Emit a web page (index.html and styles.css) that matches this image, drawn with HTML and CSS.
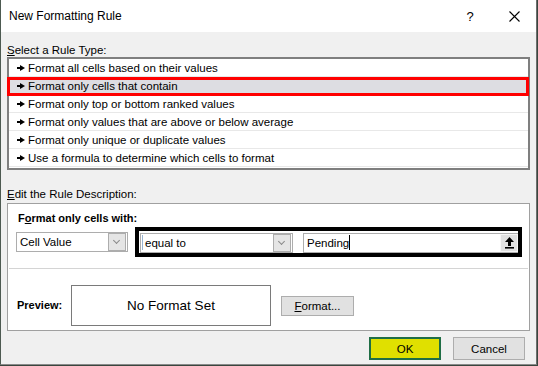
FILE: index.html
```html
<!DOCTYPE html>
<html lang="en">
<head>
    <meta charset="UTF-8">
    <title>New Formatting Rule</title>
    <link rel="stylesheet" href="styles.css">
</head>
<body>
    <div class="dialog">
        <div class="titlebar">
            <div class="title">New Formatting Rule</div>
            <div class="help">?</div>
            <div class="close">
                <svg width="11" height="11" viewBox="0 0 11 11"><path d="M0.5 0.5L10.5 10.5M10.5 0.5L0.5 10.5" stroke="#000" stroke-width="1.1"/></svg>
            </div>
        </div>

        <div class="content">
            <div class="label label-select"><u>S</u>elect a Rule Type:</div>
            <ul class="rule-list">
                <li class="rule"><span class="bullet"></span>Format all cells based on their values</li>
                <li class="rule selected"><span class="bullet"></span>Format only cells that contain</li>
                <li class="rule"><span class="bullet"></span>Format only top or bottom ranked values</li>
                <li class="rule"><span class="bullet"></span>Format only values that are above or below average</li>
                <li class="rule"><span class="bullet"></span>Format only unique or duplicate values</li>
                <li class="rule"><span class="bullet"></span>Use a formula to determine which cells to format</li>
            </ul>

            <div class="label label-edit"><u>E</u>dit the Rule Description:</div>
            <div class="panel">
                <div class="criteria">
                    <div class="label-bold">F<u>o</u>rmat only cells with:</div>
                    <div class="controls">
                        <div class="combo combo-cell">
                            <span class="combo-text">Cell Value</span>
                            <span class="drop"></span>
                        </div>
                        <div class="highlight">
                            <div class="combo combo-op">
                                <span class="combo-text"><span class="caret caret-light"></span>equal to</span>
                                <span class="drop"></span>
                            </div>
                            <div class="combo combo-value">
                                <span class="combo-text">Pending<span class="caret"></span></span>
                                <span class="ref-btn">
                                    <svg width="11" height="13" viewBox="0 0 11 13"><path d="M5.5 1L1 6h3v4h3V6h3z" fill="#000"/><rect x="1" y="11" width="9" height="1.6" fill="#000"/></svg>
                                </span>
                            </div>
                        </div>
                    </div>
                </div>
                <div class="preview-row">
                    <div class="label-bold preview-label">Preview:</div>
                    <div class="preview-box">No Format Set</div>
                    <button class="btn btn-format"><u>F</u>ormat...</button>
                </div>
            </div>

            <div class="actions">
                <button class="btn btn-ok">OK</button>
                <button class="btn">Cancel</button>
            </div>
        </div>
    </div>
</body>
</html>
```

FILE: styles.css
```css
:root {
    --face: #f0f0f0;
    --line: #adadad;
    --btn: #e1e1e1;
    --text: #000000;
}

body {
    margin: 0;
    background: #3a463e;
    font-family: 'Liberation Sans', Arial, sans-serif;
    font-size: 11.5px;
    color: var(--text);
}

.dialog {
    width: 535px;
    height: 364px;
    background: var(--face);
    border-left: 1px solid #4d5a51;
    border-right: 1px solid #6e6e6e;
    border-bottom: 1px solid #8a8a8a;
    display: flex;
    flex-direction: column;
}

/* title bar */
.titlebar {
    height: 32px;
    background: #ffffff;
    display: flex;
    align-items: center;
    padding-left: 8px;
}

.title {
    flex: 1;
    font-size: 12px;
}

.help {
    width: 12px;
    text-align: center;
    font-size: 13px;
    margin-right: 33px;
}

.close {
    width: 11px;
    height: 11px;
    margin-right: 16px;
    display: flex;
}

.content {
    flex: 1;
    padding: 0 6px;
    display: flex;
    flex-direction: column;
}

.label {
    height: 16px;
    line-height: 16px;
}

.label-select {
    margin-top: 10px;
    margin-bottom: -1px;
}

.label-edit {
    margin-top: 16px;
    margin-bottom: 1px;
}

/* rule list */
.rule-list {
    list-style: none;
    margin: 0;
    padding: 0 0 1px 0;
    background: #ffffff;
    border: 2px solid #7f7f7f;
}

.rule {
    border-bottom: 1px solid #e8e8e8;
    display: flex;
    align-items: center;
    padding-left: 8px;
    padding-top: 1px;
    box-sizing: border-box;
    height: 18px;
    position: relative;
}

.rule.selected {
    background: #dddde2;
}

.rule.selected::after {
    content: '';
    position: absolute;
    top: 0;
    bottom: -2px;
    left: -2px;
    right: -1px;
    border: 3px solid #ff0000;
}

.bullet {
    width: 8px;
    height: 6px;
    margin-right: 3px;
    position: relative;
}

.bullet::before {
    content: '';
    position: absolute;
    left: 0;
    top: 2px;
    width: 3px;
    height: 2px;
    background: #000;
}

.bullet::after {
    content: '';
    position: absolute;
    left: 3px;
    top: 0;
    border-left: 5px solid #000;
    border-top: 3px solid transparent;
    border-bottom: 3px solid transparent;
}

/* description panel */
.panel {
    background: #ffffff;
    border: 1px solid #a0a0a0;
    display: flex;
    flex-direction: column;
}

.criteria {
    padding: 7px 0 11px 9px;
    margin: 0 1px;
    border-bottom: 1px solid #d4d4d4;
}

.label-bold {
    font-weight: 700;
    font-size: 11px;
    height: 15px;
    line-height: 15px;
}

.controls {
    display: flex;
    align-items: center;
    margin-top: 1px;
}

.combo {
    height: 20px;
    box-sizing: border-box;
    border: 1px solid var(--line);
    background: #fff;
    display: flex;
    align-items: center;
    justify-content: space-between;
    padding-left: 3px;
}

.combo-cell {
    width: 112px;
    margin-left: -2px;
}

.combo-op {
    width: 153px;
    padding-left: 1px;
}

.combo-value {
    width: 215px;
    margin-left: 10px;
    border-right: none;
}

.combo-text {
    display: flex;
    align-items: center;
}

.caret {
    width: 1px;
    height: 15px;
    background: #000;
}

.caret-light {
    background: #99b4d1;
    margin-right: 2px;
}

.drop {
    width: 16px;
    height: 16px;
    margin-right: 1px;
    border: 1px solid var(--line);
    background: #e5e5e5;
    position: relative;
}

.drop::after {
    content: '';
    position: absolute;
    left: 5px;
    top: 4px;
    width: 4px;
    height: 4px;
    border-right: 1px solid #8a8a8a;
    border-bottom: 1px solid #8a8a8a;
    transform: rotate(45deg);
}

.ref-btn {
    width: 16px;
    height: 16px;
    border: 1px solid #f6f6f6;
    background: #e1e1e1;
    display: flex;
    align-items: center;
    justify-content: center;
}

.highlight {
    display: flex;
    align-items: center;
    margin-left: 7px;
    border: 4px solid #000;
    padding: 1px 0 0 1px;
    height: 21px;
}

/* preview */
.preview-row {
    display: flex;
    align-items: center;
    padding: 16px 0 4px 9px;
}

.preview-label {
    width: 54px;
}

.preview-box {
    width: 198px;
    height: 39px;
    border: 1px solid #7a7a7a;
    display: flex;
    align-items: center;
    justify-content: center;
    font-size: 13.5px;
}

.btn {
    font-family: inherit;
    font-size: 11.5px;
    color: var(--text);
    background: var(--btn);
    border: 1px solid var(--line);
    width: 72px;
    height: 23px;
    padding: 0;
}

.btn-format {
    width: 73px;
    height: 20px;
    margin-left: 10px;
}

.actions {
    display: flex;
    justify-content: flex-end;
    gap: 12px;
    margin-top: 6px;
    padding-right: 5px;
}

.btn-ok {
    background: #e0e000;
    border: 2px solid #1f6e46;
}
```
